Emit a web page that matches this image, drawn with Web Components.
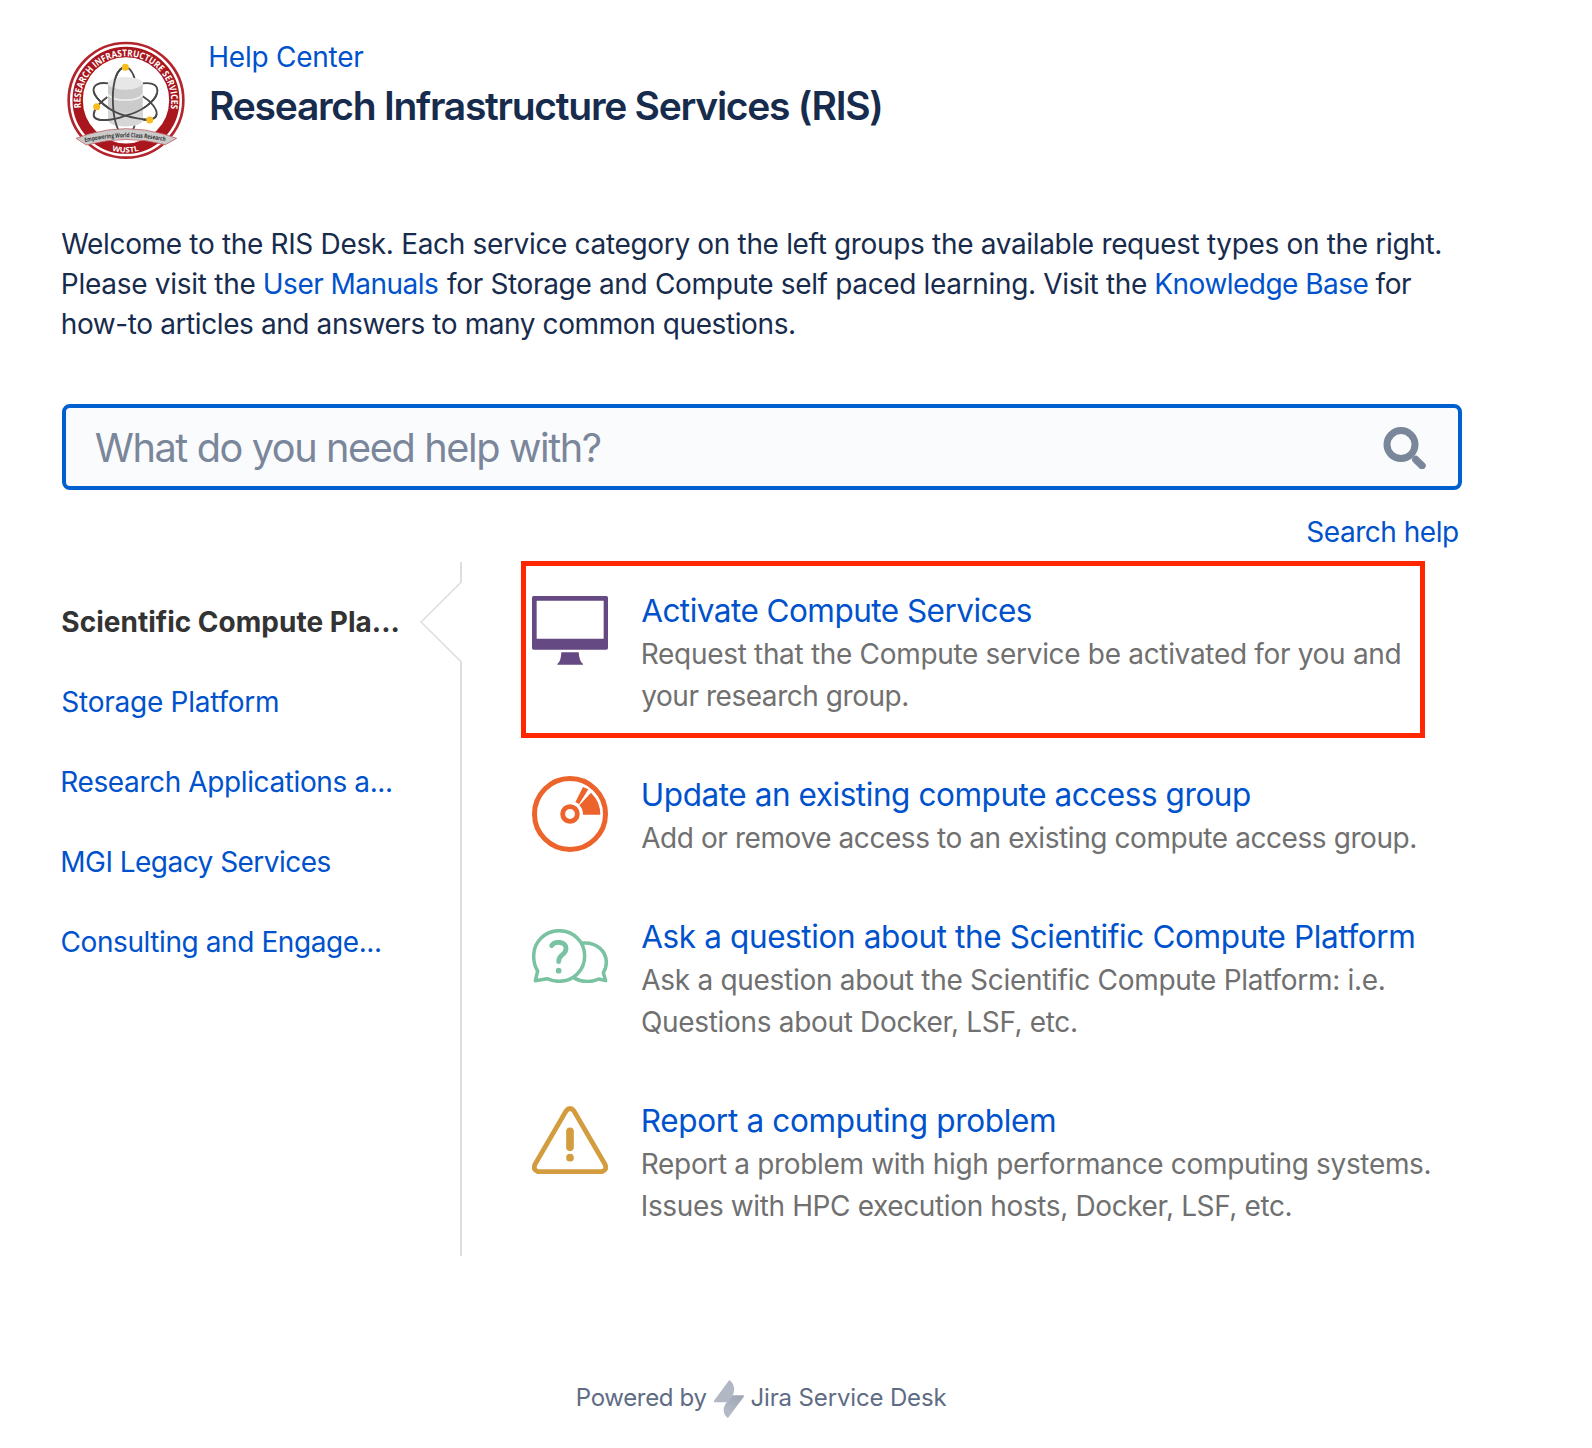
<!DOCTYPE html>
<html lang="en">
<head>
<meta charset="utf-8">
<title>Research Infrastructure Services (RIS)</title>
<style>
html, body { margin: 0; padding: 0; background: #fff; }
body { font-family: Inter, "Liberation Sans", sans-serif; color: #172b4d; }
</style>
</head>
<body>
<help-portal></help-portal>
<script>
const make = (name, html, setup) => {
  const tpl = document.createElement('template');
  tpl.innerHTML = html;
  customElements.define(name, class extends HTMLElement {
    connectedCallback() {
      if (this.shadowRoot) return;
      this.attachShadow({ mode: 'open' }).append(tpl.content.cloneNode(true));
      if (setup) setup.call(this, this.shadowRoot);
    }
  });
};

const ctx = document.createElement('canvas').getContext('2d');
make('fit-line', `<style>
  :host { display: block; white-space: nowrap; flex: none; }
</style><slot></slot>`, function () {
  const text = this.textContent, ink = +this.getAttribute('ink');
  const cs = getComputedStyle(this);
  ctx.font = `${cs.fontWeight} ${cs.fontSize} ${cs.fontFamily}`;
  const m = ctx.measureText(text);
  const natural = m.actualBoundingBoxRight + m.actualBoundingBoxLeft;
  const slant = /^[AWy]/.test(text), stem = /^[RPMhIUKS]/.test(text);
  const lead = slant ? -0.8 : stem ? 0.8 : 0;
  const span = stem ? ink - 0.8 : slant ? ink + 0.6 : ink;
  this.style.letterSpacing = ((span - natural) / (text.length - 1)).toFixed(4) + 'px';
  this.style.textIndent = (m.actualBoundingBoxLeft + lead).toFixed(2) + 'px';
  this.style.width = ink + 'px';
});

make('ris-logo', `<style>:host{display:block;width:150px;height:140px;flex:none} svg{display:block} text{font-family:"Open Sans","Noto Sans",sans-serif;font-weight:700}</style>
<svg width="150" height="140" viewBox="0 0 450 420">
  <circle cx="216" cy="211" r="172" fill="#fff" stroke="#b3242c" stroke-width="8"/>
  <circle cx="216" cy="211" r="145" fill="none" stroke="#a9161d" stroke-width="31"/>
  <defs>
    <path id="top" d="M82 238 A136 136 0 1 1 350 238"/>
    <path id="bot" d="M120 334 A154 154 0 0 0 312 334"/>
    <path id="rib" d="M93 337 Q214 308 338 335"/>
  </defs>
  <text font-size="28" fill="#fff"><textPath href="#top" startOffset="4" textLength="468" lengthAdjust="spacingAndGlyphs">RESEARCH INFRASTRUCTURE SERVICES</textPath></text>
  <g fill="none" stroke="#484848" stroke-width="5.500">
    <path d="M163 160C135 156 116 164 119 184C123 204 164 245 214 257"/>
    <path d="M266 160C300 156 314 168 309 190C303 214 262 246 214 257"/>
    <path d="M160 201C140 216 118 238 119 256C122 276 172 274 214 257"/>
    <path d="M266 199C290 214 309 236 308 252C306 276 262 274 214 257"/>
    <path d="M222 113Q235 122 242 146M206 113C184 124 174 170 177 225M234 302Q240 295 242 286"/>
  </g>
  <path d="M162 160 V272 Q172 289 214 289 Q256 289 266 272 V160Z" fill="#cbcbcb"/>
  <path d="M162 190 Q175 208 214 208 Q254 208 266 190 V197 Q254 213 214 213 Q175 213 162 197Z" fill="#ededed"/>
  <path d="M162 232 Q175 248 214 248 Q254 248 266 232 V272 Q256 289 214 289 Q172 289 162 272Z" fill="#d6d6d6"/>
  <ellipse cx="214" cy="160" rx="52" ry="19" fill="#e7e7e7"/>
  <g fill="none" stroke="#484848" stroke-width="5.500">
    <path d="M119 184C123 204 164 245 214 257C262 270 306 276 308 252"/>
    <path d="M309 190C303 214 262 246 214 257C172 274 122 276 119 256"/>
    <path d="M206 113C184 124 174 170 177 225Q179 272 194 302"/>
  </g>
  <g fill="#f8bd1c"><circle cx="214" cy="112" r="10.500"/><circle cx="128" cy="230" r="10.500"/><circle cx="287" cy="270" r="10.500"/></g>
  <path d="M66 325 L105 312 Q216 280 328 312 L368 325 L334 344 Q216 312 97 345Z" fill="#cacaca" stroke="#c0666b" stroke-width="2.500"/>
  <text font-size="18.500" fill="#333"><textPath href="#rib" textLength="243" lengthAdjust="spacingAndGlyphs">Empowering World Class Research</textPath></text>
  <text font-size="22.500" fill="#fff"><textPath href="#bot" startOffset="61" textLength="82" lengthAdjust="spacingAndGlyphs">WUSTL</textPath></text>
</svg>`);

make('portal-header', `<style>
  :host { display: flex; height: 194px; padding: 30px 0 0 54px; }
  .t { padding: 7px 0 0 6.300px; }
  .crumb { font-size: 28px; line-height: 40px; color: #0052cc; }
  .title { font-size: 39px; line-height: 52px; font-weight: 600; margin: 2.500px 0 0; }
</style>
<ris-logo></ris-logo>
<div class="t"><fit-line class="crumb" ink="153">Help Center</fit-line>
<fit-line class="title" ink="669.5">Research Infrastructure Services (RIS)</fit-line></div>`);

make('portal-intro', `<style>
  :host { display: block; padding-left: 62px; font-size: 28px; line-height: 40px; }
  .row { display: flex; } .a { color: #0052cc; }
</style>
<fit-line ink="1378.5">Welcome to the RIS Desk. Each service category on the left groups the available request types on the right.</fit-line>
<div class="row"><fit-line ink="192.5" style="margin-right:9.500px">Please visit the</fit-line>
<fit-line class="a" ink="174" style="margin-right:9px">User Manuals</fit-line>
<fit-line ink="699" style="margin-right:9.500px">for Storage and Compute self paced learning. Visit the</fit-line>
<fit-line class="a" ink="212" style="margin-right:8px">Knowledge Base</fit-line>
<fit-line ink="35.5">for</fit-line></div>
<fit-line ink="732">how-to articles and answers to many common questions.</fit-line>`);

make('search-field', `<style>
  :host { display: block; margin: 60px 0 0 62px; width: 1400px; }
  .box { box-sizing: border-box; height: 86px; border: 4px solid #0060d0; border-radius: 8px; background: #fafbfd; display: flex; align-items: center; justify-content: space-between; padding: 0 32px 0 30.500px; }
  .ph { font-size: 39.700px; line-height: 76px; padding-top: 2px; color: #7a869a; }
  .help { display: flex; justify-content: flex-end; padding: 22px 4px 0 0; font-size: 28px; line-height: 40px; color: #0052cc; }
</style>
<div class="box"><fit-line class="ph" ink="504.5">What do you need help with?</fit-line>
<svg width="43" height="43" viewBox="0 -.6 43 43" fill="none" stroke="#7a869a"><circle cx="18" cy="18" r="14" stroke-width="7"/><path d="M32.800 33L39 39" stroke-width="7.500" stroke-linecap="round"/></svg></div>
<div class="help"><fit-line ink="151.5">Search help</fit-line></div>`);

make('category-nav', `<style>
  :host { display: flex; width: 401px; height: 694px; flex: none; }
  .list { width: 359px; padding-top: 20px; padding-left: .5px; box-sizing: border-box; font-size: 28px; line-height: 80px; color: #0052cc; }
  .on { color: #333; font-weight: 700; } svg { display: block; flex: none; }
</style>
<div class="list">
<fit-line class="on" ink="337">Scientific Compute Pla...</fit-line>
<fit-line ink="216.5">Storage Platform</fit-line>
<fit-line ink="329.5">Research Applications a...</fit-line>
<fit-line ink="269">MGI Legacy Services</fit-line>
<fit-line ink="318.5">Consulting and Engage...</fit-line></div>
<svg width="42" height="694" viewBox="0 0 42 694" fill="none" stroke="#ddd"><path d="M41 0V20M41 100V694" stroke-width="2"/><path d="M41.300 20L1 60L41.300 100" stroke-width="1.500"/></svg>`);

make('service-item', `<style>
  :host { display: flex; position: relative; margin-bottom: 58px; }
  .icon { width: 76px; height: 76px; margin: .7px 34px 0 0; display: flex; align-items: center; flex: none; }
  .title { font-size: 31.500px; line-height: 40px; color: #0052cc; margin-bottom: 2px; display: block; }
  .desc { font-size: 28px; line-height: 42px; color: #707070; display: block; }
  .mark { display: none; }
  :host([marked]) .icon { margin-top: 1.500px; }
  :host([marked]) .mark { display: block; position: absolute; left: -11px; top: -30px; width: 904px; height: 177px; box-sizing: border-box; border: 5px solid #ff2600; }
</style>
<div class="icon"><slot name="icon"></slot></div>
<div><span class="title"><slot name="title"></slot></span><span class="desc"><slot></slot></span></div>
<div class="mark"></div>`);

make('service-list', `<style>
  :host { display: block; padding: 29px 0 0 70px; } svg { display: block; }
</style>
<service-item marked>
<svg slot="icon" width="76" height="69" viewBox="396 136 228 207"><path fill="#654982" fill-rule="evenodd" d="M401 136H619Q624 136 624 141V292Q624 297 619 297H401Q396 297 396 292V141Q396 136 401 136ZM410 150V264H611V150Z"/><path fill="#654982" d="M484 305H536Q538 333 549 340V342H472V340Q483 333 484 305Z"/></svg>
<fit-line slot="title" ink="390">Activate Compute Services</fit-line>
<fit-line ink="757.5">Request that the Compute service be activated for you and</fit-line>
<fit-line ink="265.5">your research group.</fit-line>
</service-item>
<service-item>
<svg slot="icon" width="76" height="76" viewBox="36 47 228 228"><g fill="none" stroke="#ec632b"><circle cx="150" cy="161" r="106.500" stroke-width="15"/><circle cx="150" cy="161" r="22" stroke-width="14.500"/></g><path fill="#ec632b" d="M189 80L205 87L177 132Q173 127 166 126ZM213 97Q241 124 241 163H189Q189 145 178 135Z"/></svg>
<fit-line slot="title" ink="608">Update an existing compute access group</fit-line>
<fit-line ink="773.5">Add or remove access to an existing compute access group.</fit-line>
</service-item>
<service-item>
<svg slot="icon" width="76" height="54" viewBox="36 56 228 162"><g fill="none" stroke="#79c3a2" stroke-width="10.500" stroke-linejoin="round" stroke-linecap="round"><path d="M46 211L53 182C44 168 41 152 41 137C41 94 75 61 118 61C160 61 194 94 194 137C194 180 160 213 118 213C104 213 92 210 81 205Z"/><path d="M189 98C230 95 259 122 259 157C259 168 256 178 250 187L257 211L236 206C212 217 185 215 164 204"/><path d="M95 106C103 92 138 92 138 114C138 136 116 130 116 154" stroke-width="14.500"/></g><circle cx="116" cy="181" r="8.500" fill="#79c3a2"/></svg>
<fit-line slot="title" ink="772.5">Ask a question about the Scientific Compute Platform</fit-line>
<fit-line ink="742">Ask a question about the Scientific Compute Platform: i.e.</fit-line>
<fit-line ink="434">Questions about Docker, LSF, etc.</fit-line>
</service-item>
<service-item>
<svg slot="icon" width="76" height="68" viewBox="36 47 228 204"><g fill="none" stroke="#d39d3f" stroke-width="14.500"><path d="M138 62Q150 47 162 62L255 222Q262 240 246 244H54Q38 240 45 222Z"/><path d="M150 123V171" stroke-width="23" stroke-linecap="round"/></g><circle cx="150" cy="202" r="11.500" fill="#d39d3f"/></svg>
<fit-line slot="title" ink="413">Report a computing problem</fit-line>
<fit-line ink="787.5">Report a problem with high performance computing systems.</fit-line>
<fit-line ink="648.5">Issues with HPC execution hosts, Docker, LSF, etc.</fit-line>
</service-item>`);

make('portal-footer', `<style>
  :host { display: flex; padding-left: 577px; font-size: 24px; line-height: 42px; color: #5e6c84; }
  svg { margin: 3px 7.700px 0 7.300px; flex: none; }
</style>
<fit-line ink="129.5">Powered by</fit-line>
<svg width="30" height="38" viewBox="462 60 90 114"><defs><linearGradient id="g" x1="0" y1="1" x2=".6" y2="0"><stop offset=".3" stop-color="#b3bac5"/><stop offset="1" stop-color="#a0a8b8"/></linearGradient></defs><path fill="#b1b8c4" d="M508 60C524 71 526 91 518 106L502 127H465Q460 126 463 121Z"/><path fill="url(#g)" d="M518 106H549Q554 107 551 111L504 174C488 165 488 143 497 131Z"/></svg>
<fit-line ink="195">Jira Service Desk</fit-line>`);

make('help-portal', `<style>
  :host { display: flex; flex-direction: column; width: 1592px; height: 1448px; overflow: hidden; }
  .main { display: flex; padding: 10px 0 0 61px; height: 694px; margin-bottom: 121px; }
</style>
<portal-header></portal-header>
<portal-intro></portal-intro>
<search-field></search-field>
<div class="main"><category-nav></category-nav><service-list></service-list></div>
<portal-footer></portal-footer>`);
</script>
</body>
</html>
